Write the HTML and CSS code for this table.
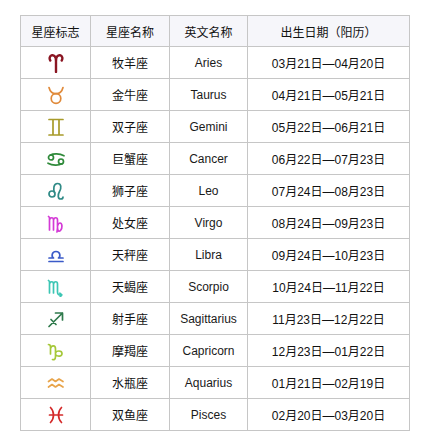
FILE: index.html
```html
<!DOCTYPE html>
<html lang="zh">
<head>
<meta charset="utf-8">
<link rel="stylesheet" href="styles.css">
</head>
<body>
<table class="zodiac">
<colgroup><col class="c1"><col class="c2"><col class="c3"><col class="c4"></colgroup>
<thead>
<tr><th>星座标志</th><th>星座名称</th><th>英文名称</th><th>出生日期<span class="paren">（</span>阳历<span class="paren">）</span></th></tr>
</thead>
<tbody>
<tr><td><svg class="ic aries" viewBox="0 0 20 20"><path d="M10 19V8C10 3.5 8 2 6 2.3C3.6 2.7 3 5.5 4.3 7.5M10 8C10 3.5 12 2 14 2.3C16.4 2.7 17 5.5 15.7 7.5"/></svg></td><td class="zh">牧羊座</td><td class="en">Aries</td><td class="dt">03月21日—04月20日</td></tr>
<tr><td><svg class="ic taurus" viewBox="0 0 20 20"><circle cx="10" cy="13.5" r="4.8"/><path d="M3 2.5C4 6.5 6.5 8.7 10 8.7C13.5 8.7 16 6.5 17 2.5"/></svg></td><td class="zh">金牛座</td><td class="en">Taurus</td><td class="dt">04月21日—05月21日</td></tr>
<tr><td><svg class="ic gemini" viewBox="0 0 20 20"><path d="M3 2.5H17M3 18H17M7 2.5V18M13 2.5V18"/></svg></td><td class="zh">双子座</td><td class="en">Gemini</td><td class="dt">05月22日—06月21日</td></tr>
<tr><td><svg class="ic cancer" viewBox="0 0 20 20"><circle cx="5" cy="8.5" r="2.5"/><path d="M4 6.2C7.5 4.4 13.5 4.4 18 6.8"/><circle cx="15" cy="12.5" r="2.5"/><path d="M16 14.8C12.5 16.6 6.5 16.6 2 14.2"/></svg></td><td class="zh">巨蟹座</td><td class="en">Cancer</td><td class="dt">06月22日—07月23日</td></tr>
<tr><td><svg class="ic leo" viewBox="0 0 20 20"><circle cx="6" cy="13" r="3"/><path d="M8.6 11.6C7.2 8.5 7.3 2.5 11.5 2.5C15.5 2.5 15.5 7 13.5 10.5C11.5 14 11.8 18 14.8 18C16.3 18 17 17 17 16"/></svg></td><td class="zh">狮子座</td><td class="en">Leo</td><td class="dt">07月24日—08月23日</td></tr>
<tr><td><svg class="ic virgo" viewBox="0 0 20 20"><path d="M2.5 3.5L3.5 4.5V17M3.5 7C4 4 7.5 4 7.5 7V17M7.5 7C8 4 11.5 4 11.5 7V14.5C11.5 18 13 19 14.5 17.5C16.5 15.5 16.5 10 14 10C12.5 10 12 11.5 11.5 13M11.5 15L11 19"/></svg></td><td class="zh">处女座</td><td class="en">Virgo</td><td class="dt">08月24日—09月23日</td></tr>
<tr><td><svg class="ic libra" viewBox="0 0 20 20"><path d="M3 16.5H17M3 13H7.5C5.5 12 5.3 6.5 10 6.5C14.7 6.5 14.5 12 12.5 13H17"/></svg></td><td class="zh">天秤座</td><td class="en">Libra</td><td class="dt">09月24日—10月23日</td></tr>
<tr><td><svg class="ic scorpio" viewBox="0 0 20 20"><path d="M2.5 3.5L3.5 4.5V16M3.5 7C4 4 7.5 4 7.5 7V16M7.5 7C8 4 11.5 4 11.5 7V15C11.5 17.5 13 18.5 15.5 18M13.8 16.2L15.8 18L14.2 19.8"/></svg></td><td class="zh">天蝎座</td><td class="en">Scorpio</td><td class="dt">10月24日—11月22日</td></tr>
<tr><td><svg class="ic sagittarius" viewBox="0 0 20 20"><path d="M3 17.5L16.5 4M9.5 4H16.5V11M5 10.5L10 15.5"/></svg></td><td class="zh">射手座</td><td class="en">Sagittarius</td><td class="dt">11月23日—12月22日</td></tr>
<tr><td><svg class="ic capricorn" viewBox="0 0 20 20"><path d="M2.5 3.5C3.5 3.5 4.5 4.5 4.5 6V13M4.5 7.5C5.5 4 9.5 4 9.5 8V15.5C9.5 18.5 8 19 6.5 18.5M9.5 12C10 9.5 16 9 16 12.5C16 15.5 12 16 10 14"/></svg></td><td class="zh">摩羯座</td><td class="en">Capricorn</td><td class="dt">12月23日—01月22日</td></tr>
<tr><td><svg class="ic aquarius" viewBox="0 0 20 20"><path d="M2.5 8.5L6 6L9.5 8.5L13 6L17 8.5M2.5 14L6 11.5L9.5 14L13 11.5L17 14"/></svg></td><td class="zh">水瓶座</td><td class="en">Aquarius</td><td class="dt">01月21日—02月19日</td></tr>
<tr><td><svg class="ic pisces" viewBox="0 0 20 20"><path d="M4.5 2.5C8.5 6.5 8.5 13.5 4.5 17.5M15.5 2.5C11.5 6.5 11.5 13.5 15.5 17.5M3.5 10H16.5"/></svg></td><td class="zh">双鱼座</td><td class="en">Pisces</td><td class="dt">02月20日—03月20日</td></tr>
</tbody>
</table>
</body>
</html>
```
FILE: styles.css
```css
html, body {
  margin: 0;
  padding: 0;
  background: #ffffff;
}
body {
  padding: 15px 0 0 20px;
  font-family: "Liberation Sans", "Noto Sans CJK SC", sans-serif;
  font-size: 12px;
  color: #111;
}
.zodiac {
  border-collapse: collapse;
  table-layout: fixed;
  width: 389px;
}
.c1 { width: 70px; }
.c2 { width: 79px; }
.c3 { width: 78px; }
.c4 { width: 162px; }
.zodiac th,
.zodiac td {
  border: 1px solid #c6c6c6;
  text-align: center;
  vertical-align: middle;
  padding: 0;
}
.zodiac th {
  height: 30px;
  background: #f6f6fa;
  font-weight: normal;
  font-family: "Noto Sans CJK SC", sans-serif;
}
.zodiac td {
  height: 31px;
}
.zh {
  font-family: "Noto Sans CJK SC", sans-serif;
}
.en {
  font-family: "Liberation Sans", sans-serif;
  color: #1a1a1a;
}
.dt {
  font-family: "Liberation Sans", "Noto Sans CJK SC", sans-serif;
}
.paren {
  font-family: "Noto Sans CJK SC", sans-serif;
}
.ic {
  display: block;
  margin: 0 auto;
  width: 20px;
  height: 20px;
  fill: none;
  stroke-width: 1.7;
  stroke-linecap: round;
  stroke-linejoin: round;
}
.aries { stroke: #8a1522; stroke-width: 2.4; }
.taurus { stroke: #e08a3a; }
.gemini { stroke: #a89b2a; }
.cancer { stroke: #2f8a3a; }
.leo { stroke: #2f8a86; }
.virgo { stroke: #d43ad6; }
.libra { stroke: #3a5ac8; }
.scorpio { stroke: #3cc6b4; }
.sagittarius { stroke: #2f7a4c; }
.capricorn { stroke: #a6c83a; }
.aquarius { stroke: #e8a44a; }
.pisces { stroke: #d42a2a; }
```
